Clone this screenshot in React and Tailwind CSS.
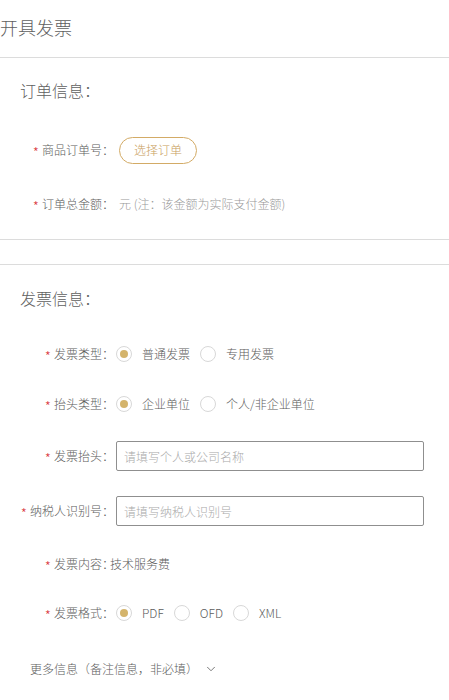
import React from 'react';
import { ChevronDown } from 'lucide-react';

const Label = ({ children }) => (
  <div className="w-[114px] shrink-0 flex items-center justify-end text-[12px] text-[#5c5c5c]">
    <span className="text-[#d9363e] mr-[3px] text-[14px] leading-none pt-[4px]">*</span>
    <span>{children}</span>
  </div>
);

const Radio = ({ checked, label }) => (
  <div className="flex items-center mr-[10px]">
    <span className="w-4 h-4 rounded-full border border-[#d8d8d8] bg-white flex items-center justify-center">
      {checked && <span className="w-2 h-2 rounded-full bg-[#d4b46c]"></span>}
    </span>
    <span className="ml-[10px] text-[12px] text-[#5c5c5c]">{label}</span>
  </div>
);

const Row = ({ className = '', children }) => (
  <div className={`h-[30px] flex items-center ${className}`}>{children}</div>
);

const App = () => {
  return (
    <div className="w-[449px] min-h-[700px] bg-white font-light font-['Noto_Sans_CJK_SC','Noto_Sans',sans-serif]">
      {/* Page title */}
      <div className="h-[58px] flex items-center border-b border-[#dcdcdc] text-[18px] text-[#606060] pb-[3px]">
        开具发票
      </div>

      {/* Order info */}
      <div className="pt-[20px] pb-[20px] border-b border-[#dcdcdc]">
        <div className="h-[24px] flex items-center pl-[20px] text-[16px] text-[#606060]">订单信息：</div>

        <Row className="mt-[33px]">
          <Label>商品订单号：</Label>
          <button className="ml-[5px] h-[27px] px-[14px] rounded-full border border-[#d3ab66] text-[#c9a05c] text-[12px] flex items-center">
            选择订单
          </button>
        </Row>

        <Row className="mt-[24px]">
          <Label>订单总金额：</Label>
          <span className="ml-[5px] text-[12px] text-[#999]">元 (注：该金额为实际支付金额)</span>
        </Row>
      </div>

      {/* Invoice info */}
      <div className="mt-[24px] border-t border-[#dcdcdc] pt-[21px] pb-[16px]">
        <div className="h-[24px] flex items-center pl-[20px] text-[16px] text-[#606060]">发票信息：</div>

        <Row className="mt-[29px]">
          <Label>发票类型：</Label>
          <div className="ml-[2px] flex items-center">
            <Radio checked label="普通发票" />
            <Radio label="专用发票" />
          </div>
        </Row>

        <Row className="mt-[20px]">
          <Label>抬头类型：</Label>
          <div className="ml-[2px] flex items-center">
            <Radio checked label="企业单位" />
            <Radio label="个人/非企业单位" />
          </div>
        </Row>

        <Row className="mt-[22px]">
          <Label>发票抬头：</Label>
          <input
            className="ml-[2px] w-[308px] h-[30px] border border-[#8f8f8f] rounded-[2px] px-[7px] text-[12px] text-[#555] placeholder:text-[#aaa] outline-none"
            placeholder="请填写个人或公司名称"
          />
        </Row>

        <Row className="mt-[25px]">
          <Label>纳税人识别号：</Label>
          <input
            className="ml-[2px] w-[308px] h-[30px] border border-[#8f8f8f] rounded-[2px] px-[7px] text-[12px] text-[#555] placeholder:text-[#aaa] outline-none"
            placeholder="请填写纳税人识别号"
          />
        </Row>

        <Row className="mt-[23px]">
          <Label>发票内容：</Label>
          <span className="-ml-[4px] text-[12px] text-[#5c5c5c]">技术服务费</span>
        </Row>

        <Row className="mt-[19px]">
          <Label>发票格式：</Label>
          <div className="ml-[2px] flex items-center">
            <Radio checked label="PDF" />
            <Radio label="OFD" />
            <Radio label="XML" />
          </div>
        </Row>

        <Row className="mt-[26px] pl-[30px]">
          <span className="text-[12px] text-[#5c5c5c]">更多信息（备注信息，非必填）</span>
          <ChevronDown size={14} strokeWidth={1.5} className="ml-[6px] text-[#666]" />
        </Row>
      </div>
    </div>
  );
};

export default App;
